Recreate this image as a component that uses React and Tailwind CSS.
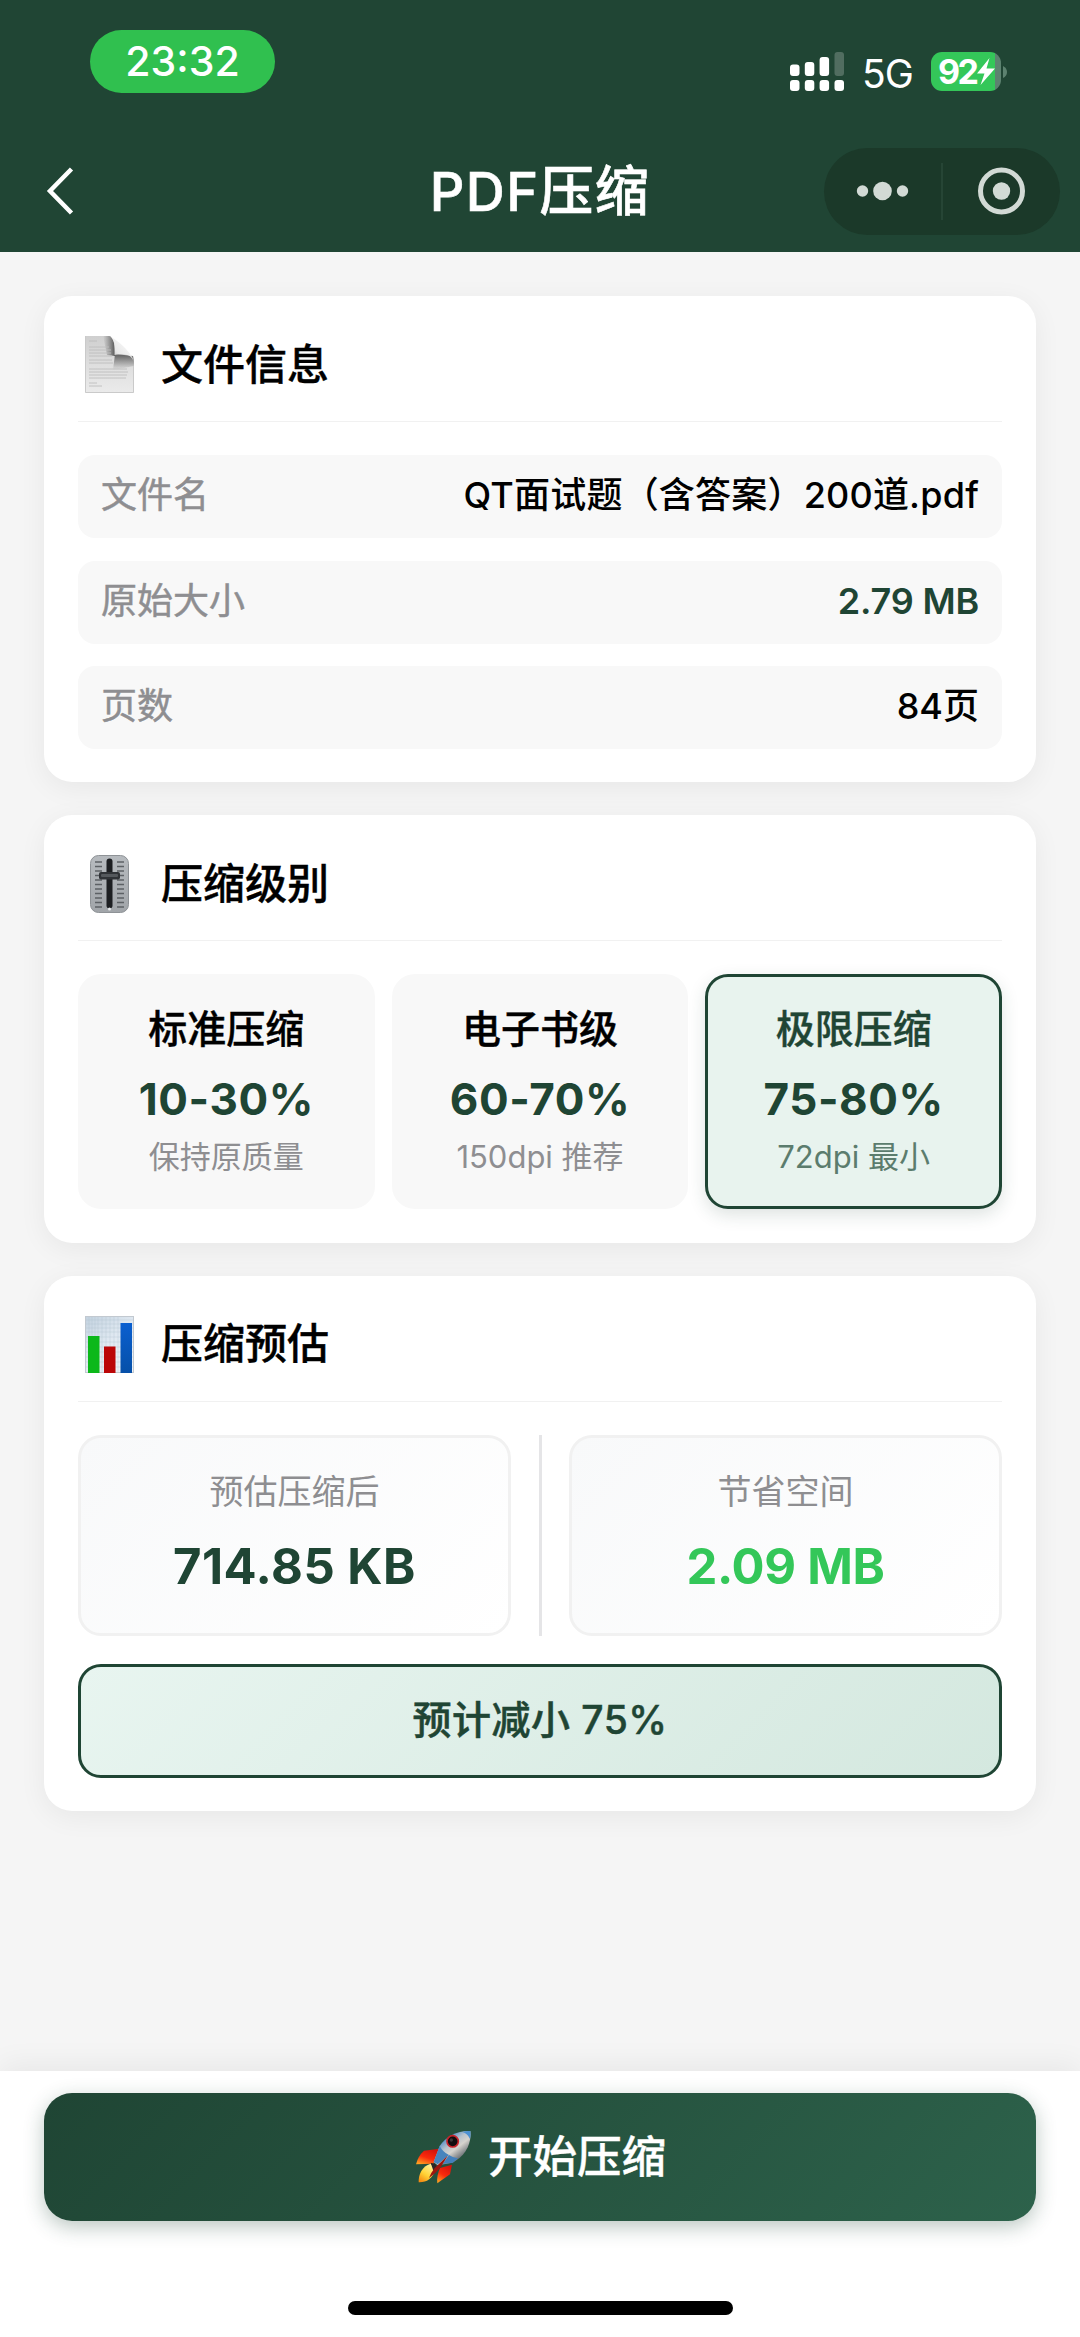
import React, { useState } from 'react';

const DocumentIcon = () => (
  <svg width="49" height="57" viewBox="0 0 49 57">
    <defs>
      <linearGradient id="docPaper" x1="0" y1="0" x2="0" y2="1">
        <stop offset="0" stopColor="#cfcfcf" />
        <stop offset="0.5" stopColor="#dedede" />
        <stop offset="1" stopColor="#ebebeb" />
      </linearGradient>
      <linearGradient id="docCurl" x1="0.1" y1="0.9" x2="0.75" y2="0.3">
        <stop offset="0" stopColor="#b5b5b5" />
        <stop offset="0.4" stopColor="#e8e8e8" />
        <stop offset="1" stopColor="#f7f7f7" />
      </linearGradient>
      <linearGradient id="docShade" x1="0" y1="0" x2="0" y2="1">
        <stop offset="0" stopColor="#5c5c5c" />
        <stop offset="1" stopColor="#6c6c6c" stopOpacity="0" />
      </linearGradient>
      <linearGradient id="docShadeLeft" x1="1" y1="0" x2="0" y2="0">
        <stop offset="0" stopColor="#555" />
        <stop offset="1" stopColor="#777" stopOpacity="0" />
      </linearGradient>
    </defs>
    <path d="M0 0H25L49 24V57H0Z" fill="url(#docPaper)" />
    <path d="M18 0H25C29 3 30 9 30 20L22 19Z" fill="url(#docShadeLeft)" />
    <path d="M30 18L48 20C49 23 49 26 49 30L28 34Z" fill="url(#docShade)" />
    <path d="M24 0C30 3 30 10 29.500 19C38 17 46 18 48.500 25C47 17 33 4 24 0Z" fill="url(#docCurl)" />
    <g stroke="#bdbdbd" strokeWidth="0.900">
      <path d="M4 5H12M4 11H24M4 14H26M4 17H26M4 20H27M4 24H27M4 27H28M4 33H42M4 36H43M4 39H42M4 42H41M4 47H12M4 50H17" />
    </g>
    <path d="M0.500 0V56.500H48.500V30" fill="none" stroke="#cacaca" />
  </svg>
);

const SliderIcon = () => (
  <svg width="39" height="58" viewBox="0 0 39 58">
    <defs>
      <linearGradient id="sliderPlate" x1="0" y1="0" x2="0" y2="1">
        <stop offset="0" stopColor="#b7bbbf" />
        <stop offset="1" stopColor="#a1a5a9" />
      </linearGradient>
    </defs>
    <rect x="0.500" y="0.500" width="38" height="57" rx="8" fill="url(#sliderPlate)" stroke="#8e9296" />
    <path
      d="M5 7H12M5 11.500H12M5 16H12M5 20.500H12M5 25H12M5 29.500H12M5 34H12M5 38.500H12M5 43H12M5 47.500H12M5 52H12M27 7H34M27 11.500H34M27 16H34M27 20.500H34M27 25H34M27 29.500H34M27 34H34M27 38.500H34M27 43H34M27 47.500H34M27 52H34"
      stroke="#5d6165"
      strokeWidth="1.300"
    />
    <rect x="16.500" y="3.500" width="6" height="50" rx="3" fill="#1d1f22" />
    <rect x="9" y="17" width="21" height="7.500" rx="2" fill="#303337" />
    <rect x="11" y="19" width="17" height="3" rx="1" fill="#55595d" />
    <circle cx="19.500" cy="54" r="1.500" fill="#e8eaec" />
  </svg>
);

const ChartIcon = () => (
  <svg width="49" height="57" viewBox="0 0 49 57">
    <defs>
      <linearGradient id="chartPaper" x1="0" y1="0" x2="0.700" y2="1">
        <stop offset="0" stopColor="#c3d2df" />
        <stop offset="0.500" stopColor="#dfe8f1" />
        <stop offset="1" stopColor="#eef3f8" />
      </linearGradient>
      <linearGradient id="chartBlue" x1="0" y1="0" x2="0" y2="1">
        <stop offset="0" stopColor="#0a5fd0" />
        <stop offset="1" stopColor="#0650a8" />
      </linearGradient>
    </defs>
    <rect x="0.500" y="0.500" width="48" height="56" fill="url(#chartPaper)" stroke="#c2c9d0" />
    <path
      d="M4 1V56M7 1V56M10 1V56M13 1V56M17 1V56M21 1V56M25 1V56M29 1V56M33 1V56M1 4H48M1 8H48M1 12H48M1 16H48M1 21H48M1 26H48M1 31H48M1 36H48M1 41H48M1 46H48M1 51H48"
      stroke="#aebfce"
      strokeOpacity="0.450"
      strokeWidth="0.700"
    />
    <rect x="3" y="20" width="11.500" height="37" fill="#0cb81a" />
    <rect x="19" y="30.500" width="11.500" height="26.500" fill="#bb0607" />
    <rect x="35.500" y="7" width="11.500" height="50" fill="url(#chartBlue)" />
  </svg>
);

const RocketIcon = () => (
  <svg width="55" height="54" viewBox="48 65 165 160">
    <defs>
      <linearGradient id="rocketBody" x1="0.250" y1="0.250" x2="0.700" y2="0.800">
        <stop offset="0" stopColor="#4f8cc8" />
        <stop offset="0.350" stopColor="#b9c3cc" />
        <stop offset="0.600" stopColor="#d6d3ce" />
        <stop offset="1" stopColor="#6c7177" />
      </linearGradient>
      <linearGradient id="rocketFin" x1="0.700" y1="0" x2="0.200" y2="1">
        <stop offset="0" stopColor="#d3120c" />
        <stop offset="0.550" stopColor="#fb2a0c" />
        <stop offset="1" stopColor="#ffa321" />
      </linearGradient>
      <linearGradient id="rocketFlame" x1="0.800" y1="0" x2="0.200" y2="1">
        <stop offset="0" stopColor="#fff6a8" />
        <stop offset="0.600" stopColor="#ffd235" />
        <stop offset="1" stopColor="#f58a12" />
      </linearGradient>
    </defs>
    <path d="M72 126L118 120L100 165L48 167Q54 142 72 126Z" fill="url(#rocketFin)" />
    <path d="M120 178L156 168L150 197L112 224Q109 204 120 178Z" fill="url(#rocketFin)" />
    <path d="M92 165C66 172 55 198 56 221C78 222 98 212 106 182Z" fill="url(#rocketFlame)" />
    <path d="M92 162L106 166L112 178L100 186Z" fill="#2c2624" />
    <path d="M211 67C178 64 138 82 119 112L101 160L113 170L158 162C192 145 216 108 211 67Z" fill="url(#rocketBody)" />
    <path d="M119 112L101 160L113 167L147 139Q129 131 119 112Z" fill="#4884bd" />
    <path d="M147 139L128 166L158 162L174 149Q160 148 147 139Z" fill="#4380bd" />
    <path d="M211 67C203 66 195 67 187 70Q203 74 210 91C212 83 212 75 211 67Z" fill="#4c91d2" />
    <path d="M143 141L104 178Q94 190 87 208Q108 194 122 176Z" fill="#9d160d" />
    <circle cx="158" cy="98" r="17" fill="#120d0f" stroke="#c9232a" strokeWidth="5" />
    <circle cx="154" cy="94" r="5" fill="#3d3438" />
  </svg>
);

const StatusBar = () => (
  <div className="flex h-[126px] items-start justify-between pl-[90px] pr-[73px]">
    <div className="mt-[30px] flex h-[63px] w-[185px] items-center justify-center rounded-full bg-[#30c04f] text-[41px] font-medium leading-none text-white">
      23:32
    </div>
    <div className="mt-[52px] flex h-[39px] items-center">
      <svg width="54" height="39" viewBox="0 0 54 39" fill="#fff">
        <rect x="0" y="12.500" width="9.500" height="11.500" rx="3" />
        <rect x="14.800" y="10" width="9.500" height="14" rx="3" />
        <rect x="29.600" y="5" width="9.500" height="19" rx="3" />
        <rect x="44.500" y="0" width="9.500" height="24" rx="3" fillOpacity="0.220" />
        <rect x="0" y="28" width="9.500" height="11" rx="3" />
        <rect x="14.800" y="28" width="9.500" height="11" rx="3" />
        <rect x="29.600" y="28" width="9.500" height="11" rx="3" />
        <rect x="44.500" y="28" width="9.500" height="11" rx="3" />
      </svg>
      <span className="ml-[18px] w-[69px] pt-[3px] text-[39px] leading-none tracking-[-1px] text-white">5G</span>
      <div className="flex h-[39px] w-[70px] items-center overflow-hidden rounded-[11px] bg-[linear-gradient(90deg,#34c759_64px,#5d8270_64px)] pl-[7px]">
        <span className="w-[39px] text-[34px] font-bold leading-none tracking-[-2.5px] text-white">92</span>
        <svg width="18" height="27" viewBox="0 0 18 27" fill="#fff">
          <path d="M12.500 0L0 15.500H7.500L3.500 27L18 10.500H9.500Z" />
        </svg>
      </div>
      <svg className="ml-[2px]" width="4" height="12" viewBox="0 0 4 12">
        <path d="M0 0Q4 2 4 6Q4 10 0 12Z" fill="#5d8270" />
      </svg>
    </div>
  </div>
);

const NavBar = () => (
  <div className="grid h-[126px] grid-cols-[300px_1fr_300px] items-start">
    <svg className="ml-[46px] mt-[41px]" width="30" height="48" viewBox="0 0 30 48">
      <path d="M25.500 2L4 24L25.500 46" fill="none" stroke="#fff" strokeWidth="4.500" />
    </svg>
    <h1 className="mt-[37px] whitespace-nowrap text-center text-[54px] font-medium leading-[58px] tracking-[1.4px] text-white [-webkit-text-stroke:0.6px_#fff]">
      PDF压缩
    </h1>
    <div className="ml-[44px] mt-[22px] flex h-[87px] w-[236px] items-center rounded-full bg-[#1b3929]">
      <svg width="236" height="87" viewBox="0 0 236 87" fill="#d2dad5">
        <circle cx="38.500" cy="43" r="5.700" />
        <circle cx="58.500" cy="43" r="9.300" />
        <circle cx="78.500" cy="43" r="5.700" />
        <rect x="117" y="15" width="2" height="57" fill="#264535" />
        <circle cx="177.500" cy="43" r="21" fill="none" stroke="#d2dad5" strokeWidth="5" />
        <circle cx="177.500" cy="43" r="8.700" />
      </svg>
    </div>
  </div>
);

const Card = ({ icon, title, children }) => (
  <section className="rounded-[28px] bg-white px-[34px] shadow-[0_6px_28px_rgba(0,0,0,0.06)]">
    <div className="flex h-[126px] items-center border-b border-[#f1f1f1]">
      <div className="flex w-[83px] justify-center pr-[21px] pt-[12px]">{icon}</div>
      <h2 className="pt-[12px] text-[42px] font-medium leading-none text-black [-webkit-text-stroke:0.4px_#000]">
        {title}
      </h2>
    </div>
    {children}
  </section>
);

const App = () => {
  const [level, setLevel] = useState(3);

  const fileInfo = [
    { label: '文件名', value: 'QT面试题（含答案）200道.pdf', style: 'font-medium tracking-[0.2px] text-black' },
    { label: '原始大小', value: '2.79 MB', style: 'font-semibold tracking-[-0.2px] text-[#1f4534]' },
    { label: '页数', value: '84页', style: 'font-medium text-black' },
  ];

  const levels = [
    { id: 1, name: '标准压缩', rate: '10-30%', desc: '保持原质量' },
    { id: 2, name: '电子书级', rate: '60-70%', desc: '150dpi 推荐' },
    { id: 3, name: '极限压缩', rate: '75-80%', desc: '72dpi 最小' },
  ];

  return (
    <div
      lang="zh-CN"
      className="flex h-[2337px] w-[1080px] flex-col overflow-hidden bg-[#f5f5f5] font-['Inter','Noto_Sans_CJK_SC',sans-serif]"
    >
      <header className="h-[252px] bg-[#204534]">
        <StatusBar />
        <NavBar />
      </header>

      <main className="flex flex-1 flex-col gap-[33px] px-[44px] pt-[44px]">
        {/* File info */}
        <Card icon={<DocumentIcon />} title="文件信息">
          <div className="flex flex-col gap-[22.5px] pb-[33px] pt-[33px]">
            {fileInfo.map((row) => (
              <div
                key={row.label}
                className="flex h-[83px] items-center justify-between rounded-[17px] bg-[#f8f8f8] px-[23px] pb-[3px] text-[36px] leading-none"
              >
                <span className="text-[#8e8e91] [-webkit-text-stroke:0.5px_#8e8e91]">{row.label}</span>
                <span className={row.style}>{row.value}</span>
              </div>
            ))}
          </div>
        </Card>

        {/* Compression level */}
        <Card icon={<SliderIcon />} title="压缩级别">
          <div className="grid grid-cols-3 gap-[17px] pb-[33.5px] pt-[33px]">
            {levels.map((item) => (
              <button
                key={item.id}
                onClick={() => setLevel(item.id)}
                className={`flex h-[235px] flex-col items-center rounded-[23px] border-[3px] pt-[29px] ${
                  level === item.id
                    ? 'border-[#1f4534] bg-[#e8f3ee] shadow-[0_6px_17px_rgba(31,69,52,0.15)]'
                    : 'border-[#f8f8f8] bg-[#f8f8f8]'
                }`}
              >
                <span
                  className={`text-[39px] font-medium leading-[46px] ${
                    level === item.id
                      ? 'text-[#1f4534] [-webkit-text-stroke:0.4px_#1f4534]'
                      : 'text-black [-webkit-text-stroke:0.4px_#000]'
                  }`}
                >
                  {item.name}
                </span>
                <span className="mt-[21px] text-[44px] font-bold leading-[52px] tracking-[0.6px] text-[#1f4534]">
                  {item.rate}
                </span>
                <span
                  className={`mt-[14px] text-[31px] leading-[36px] ${
                    level === item.id ? 'text-[#5b7c6d]' : 'text-[#8e8e91]'
                  }`}
                >
                  {item.desc}
                </span>
              </button>
            ))}
          </div>
        </Card>

        {/* Estimate */}
        <Card icon={<ChartIcon />} title="压缩预估">
          <div className="flex justify-between pt-[33.5px]">
            <div className="flex h-[201px] w-[433px] flex-col items-center rounded-[23px] border-[3px] border-[#f1f1f1] bg-linear-135 from-[#f8f9fa] to-white pt-[34px]">
              <span className="text-[34px] leading-[40px] text-[#8e8e91]">预估压缩后</span>
              <span className="mt-[27px] text-[49px] font-bold leading-[56px] tracking-[0.5px] text-[#1f4534]">
                714.85 KB
              </span>
            </div>
            <div className="w-[3px] bg-[#e5e5e7]" />
            <div className="flex h-[201px] w-[433px] flex-col items-center rounded-[23px] border-[3px] border-[#f1f1f1] bg-linear-135 from-[#f8f9fa] to-white pt-[34px]">
              <span className="text-[34px] leading-[40px] text-[#8e8e91]">节省空间</span>
              <span className="mt-[27px] text-[49px] font-bold leading-[56px] tracking-[-0.3px] text-[#34c759]">
                2.09 MB
              </span>
            </div>
          </div>
          <div className="mb-[33px] mt-[28px] flex h-[114px] items-center justify-center rounded-[23px] border-[3px] border-[#1f4534] bg-linear-135 from-[#e8f5f0] to-[#d4e8df] pb-[3px] text-[39px] font-medium leading-none tracking-[0.5px] text-[#1f4534] [-webkit-text-stroke:0.5px_#1f4534]">
            预计减小 75%
          </div>
        </Card>
      </main>

      <footer className="flex h-[266px] flex-col items-center bg-white px-[44px] pt-[22px] shadow-[0_-6px_28px_rgba(0,0,0,0.06)]">
        <button className="flex h-[128px] w-full items-center justify-center gap-[17px] rounded-[28px] bg-linear-135 from-[#1f4534] to-[#2d624b] pl-[2px] shadow-[0_6px_20px_rgba(31,69,52,0.3)]">
          <RocketIcon />
          <span className="text-[44.5px] font-medium leading-none text-white [-webkit-text-stroke:0.4px_#fff]">
            开始压缩
          </span>
        </button>
        <div className="mt-[80px] h-[14px] w-[385px] rounded-full bg-black" />
      </footer>
    </div>
  );
};

export default App;
